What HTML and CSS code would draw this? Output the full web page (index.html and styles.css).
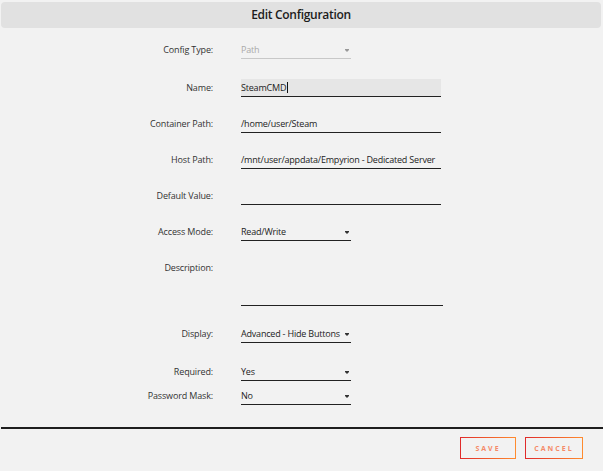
FILE: index.html
```html
<!DOCTYPE html>
<html lang="en">
<head>
<meta charset="UTF-8">
<meta name="viewport" content="width=device-width, initial-scale=1.0">
<title>Edit Configuration</title>
  <link rel="stylesheet" href="styles.css">
</head>

<body>
  <div class="dialog">
    <h1 class="title">Edit Configuration</h1>

    <div class="form">
      <div class="row">
        <label>Config Type:</label>
        <div class="field select short disabled">Path<span class="arrow"></span></div>
      </div>

      <div class="row loose">
        <label>Name:</label>
        <div class="field wide focused">SteamCMD<span class="caret"></span></div>
      </div>

      <div class="row">
        <label>Container Path:</label>
        <div class="field wide">/home/user/Steam</div>
      </div>

      <div class="row">
        <label>Host Path:</label>
        <div class="field wide">/mnt/user/appdata/Empyrion - Dedicated Server</div>
      </div>

      <div class="row">
        <label>Default Value:</label>
        <div class="field wide"></div>
      </div>

      <div class="row">
        <label>Access Mode:</label>
        <div class="field select short">Read/Write<span class="arrow"></span></div>
      </div>

      <div class="row">
        <label>Description:</label>
        <div class="field wide textarea"></div>
      </div>

      <div class="row spaced">
        <label>Display:</label>
        <div class="field select short">Advanced - Hide Buttons<span class="arrow"></span></div>
      </div>

      <div class="row loose">
        <label>Required:</label>
        <div class="field select short">Yes<span class="arrow"></span></div>
      </div>

      <div class="row tight">
        <label>Password Mask:</label>
        <div class="field select short">No<span class="arrow"></span></div>
      </div>
    </div>

    <hr>

    <footer class="actions">
      <button class="btn">SAVE</button>
      <button class="btn">CANCEL</button>
    </footer>
  </div>
</body>
</html>
```

FILE: styles.css
```css
body {
  margin: 0;
  background-color: #f2f2f2;
  font-family: 'Open Sans', 'Noto Sans', sans-serif;
  color: #222;
}

.dialog {
  width: 603px;
  height: 471px;
  padding-top: 2px;
  box-sizing: border-box;
}

.title {
  margin: 0 2px 0 1px;
  height: 26px;
  line-height: 26px;
  background-color: #e1e1e1;
  border-radius: 4px;
  text-align: center;
  font-size: 12px;
  font-weight: 600;
  color: #1c1c1c;
  letter-spacing: -0.3px;
}

.form {
  margin-top: 13px;
  display: flex;
  flex-direction: column;
  gap: 18px;
}

.row {
  display: grid;
  grid-template-columns: 213px 1fr;
  column-gap: 28px;
  align-items: start;
}

.row.loose {
  margin-top: 2px;
}

.row.spaced {
  margin-top: 1px;
}

.row.tight {
  margin-top: -12px;
}

.row label {
  text-align: right;
  font-size: 9px;
  line-height: 18px;
  letter-spacing: -0.15px;
  color: #333;
}

.field {
  position: relative;
  height: 18px;
  line-height: 18px;
  font-size: 9px;
  letter-spacing: -0.2px;
  border-bottom: 1.5px solid #222;
  box-sizing: border-box;
  color: #222;
  white-space: nowrap;
}

.field.wide {
  width: 200px;
}

.field.short {
  width: 110px;
}

.field.textarea {
  width: 202px;
  height: 47px;
}

.field.focused {
  background-color: #e6e6e6;
}

.field.disabled {
  color: #aaa;
  border-bottom-color: #c8c8c8;
}

.caret {
  display: inline-block;
  width: 1px;
  height: 11px;
  margin-left: 1px;
  background-color: #111;
  vertical-align: -2px;
}

.arrow {
  position: absolute;
  right: 2px;
  top: 8px;
  width: 4px;
  height: 3px;
  background-color: #333;
  clip-path: polygon(0 0, 100% 0, 100% 34%, 50% 100%, 0 34%);
}

.disabled .arrow {
  background-color: #999;
}

hr {
  margin: 22px 0 0 1px;
  border: none;
  height: 2px;
  background-color: #1e1e1e;
}

.actions {
  display: flex;
  justify-content: flex-end;
  gap: 9px;
  margin-top: 8px;
  padding-right: 20px;
}

.btn {
  height: 22px;
  padding: 0;
  background: transparent;
  border: 1.5px solid;
  border-image: linear-gradient(90deg, #e02a2a, #ff8c2f) 1;
  font-family: 'Open Sans', sans-serif;
  font-size: 7px;
  font-weight: 700;
  letter-spacing: 2px;
  color: #f58a68;
  cursor: pointer;
}

.btn:first-child {
  width: 56px;
}

.btn:last-child {
  width: 58px;
}
```
